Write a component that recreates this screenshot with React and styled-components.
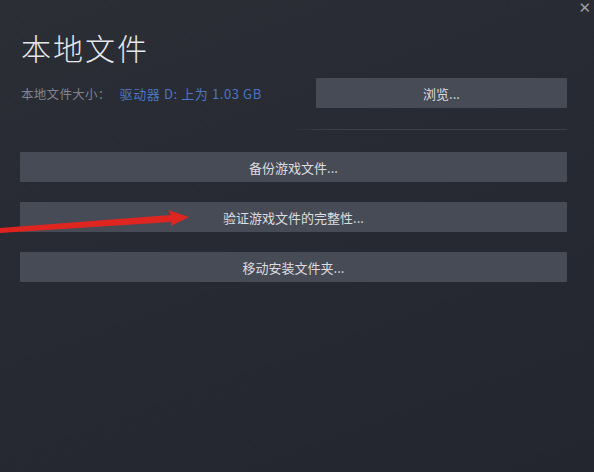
import React from "react";
import styled, { createGlobalStyle } from "styled-components";

const GlobalStyle = createGlobalStyle`
  html, body {
    margin: 0;
    padding: 0;
    background: #24272f;
  }
  * {
    box-sizing: border-box;
  }
`;

const Page = styled.div`
  position: relative;
  width: 594px;
  height: 472px;
  overflow: hidden;
  background: linear-gradient(160deg, #2b2e35 0%, #272a32 45%, #23262f 100%);
  font-family: "Noto Sans CJK SC", "Noto Sans", sans-serif;
  padding: 29px 27px 0 20px;
`;

const Close = styled.div`
  position: absolute;
  top: 1px;
  right: 3px;
  color: #9a9ea7;
  font-size: 15px;
  font-family: "DejaVu Sans", sans-serif;
  line-height: 1;
`;

const Title = styled.h1`
  margin: 0 0 0 1px;
  font-size: 30px;
  line-height: 36px;
  font-weight: 300;
  letter-spacing: 2px;
  color: #e6e7ea;
`;

const InfoRow = styled.div`
  display: flex;
  align-items: center;
  justify-content: space-between;
  margin-top: 13px;
`;

const SizeText = styled.div`
  display: flex;
  align-items: center;
  gap: 9px;
  margin-left: 1px;
  font-size: 12.5px;
  letter-spacing: 0.3px;
  color: #7f848e;
`;

const DriveLink = styled.span`
  color: #4b74c4;
  font-size: 13px;
  letter-spacing: 0.6px;
`;

const Button = styled.div`
  display: flex;
  align-items: center;
  justify-content: center;
  width: ${(p) => (p.$small ? "251px" : "100%")};
  height: 30px;
  background: #474b56;
  color: #dcdde0;
  font-size: 13px;
  border-radius: 1px;
`;

const Divider = styled.div`
  height: 1px;
  margin: 21px 0 0 268px;
  background: linear-gradient(90deg, rgba(70, 74, 84, 0) 0%, #3c404a 15%, #3c404a 100%);
`;

const ButtonList = styled.div`
  display: flex;
  flex-direction: column;
  gap: 20px;
  margin-top: 22px;
`;

const Arrow = styled.svg`
  position: absolute;
  left: 0;
  top: 200px;
  pointer-events: none;
`;

export default function App() {
  return (
    <>
      <GlobalStyle />
      <Page>
        <Close>✕</Close>
        <Title>本地文件</Title>
        <InfoRow>
          <SizeText>
            <span>本地文件大小：</span>
            <DriveLink>驱动器 D: 上为 1.03 GB</DriveLink>
          </SizeText>
          <Button $small>浏览...</Button>
        </InfoRow>
        <Divider />
        <ButtonList>
          <Button>备份游戏文件...</Button>
          <Button>验证游戏文件的完整性...</Button>
          <Button>移动安装文件夹...</Button>
        </ButtonList>
        <Arrow width="200" height="50" viewBox="0 0 200 50">
          <path
            d="M0 28 L171 15 L168 10 L189 17 L171 26 L171 22 L0 33 Z"
            fill="#e8231e"
            opacity="0.95"
          />
        </Arrow>
      </Page>
    </>
  );
}
